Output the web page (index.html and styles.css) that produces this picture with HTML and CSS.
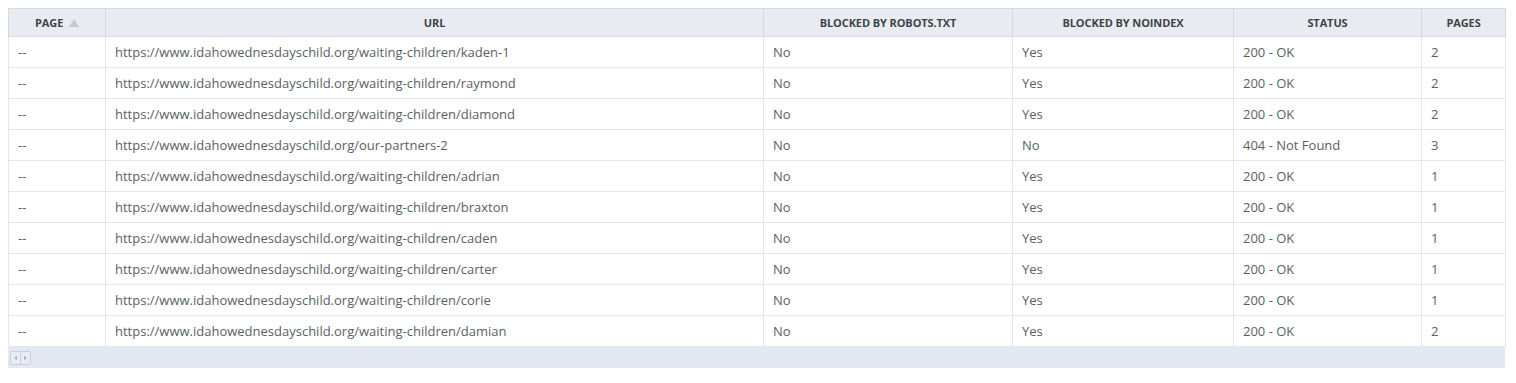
FILE: index.html
```html
<!DOCTYPE html>
<html>
<head>
<meta charset="utf-8">
<link rel="stylesheet" href="styles.css">
</head>
<body>
<div class="grid">
  <table class="tbl">
    <colgroup>
      <col class="c-page"><col class="c-url"><col class="c-robots"><col class="c-noindex"><col class="c-status"><col class="c-pages">
    </colgroup>
    <thead>
      <tr>
        <th>PAGE <span class="sort"></span></th>
        <th>URL</th>
        <th>BLOCKED BY ROBOTS.TXT</th>
        <th>BLOCKED BY NOINDEX</th>
        <th>STATUS</th>
        <th>PAGES</th>
      </tr>
    </thead>
    <tbody>
      <tr><td>--</td><td>https://www.idahowednesdayschild.org/waiting-children/kaden-1</td><td>No</td><td>Yes</td><td>200 - OK</td><td>2</td></tr>
      <tr><td>--</td><td>https://www.idahowednesdayschild.org/waiting-children/raymond</td><td>No</td><td>Yes</td><td>200 - OK</td><td>2</td></tr>
      <tr><td>--</td><td>https://www.idahowednesdayschild.org/waiting-children/diamond</td><td>No</td><td>Yes</td><td>200 - OK</td><td>2</td></tr>
      <tr><td>--</td><td>https://www.idahowednesdayschild.org/our-partners-2</td><td>No</td><td>No</td><td>404 - Not Found</td><td>3</td></tr>
      <tr><td>--</td><td>https://www.idahowednesdayschild.org/waiting-children/adrian</td><td>No</td><td>Yes</td><td>200 - OK</td><td>1</td></tr>
      <tr><td>--</td><td>https://www.idahowednesdayschild.org/waiting-children/braxton</td><td>No</td><td>Yes</td><td>200 - OK</td><td>1</td></tr>
      <tr><td>--</td><td>https://www.idahowednesdayschild.org/waiting-children/caden</td><td>No</td><td>Yes</td><td>200 - OK</td><td>1</td></tr>
      <tr><td>--</td><td>https://www.idahowednesdayschild.org/waiting-children/carter</td><td>No</td><td>Yes</td><td>200 - OK</td><td>1</td></tr>
      <tr><td>--</td><td>https://www.idahowednesdayschild.org/waiting-children/corie</td><td>No</td><td>Yes</td><td>200 - OK</td><td>1</td></tr>
      <tr><td>--</td><td>https://www.idahowednesdayschild.org/waiting-children/damian</td><td>No</td><td>Yes</td><td>200 - OK</td><td>2</td></tr>
    </tbody>
  </table>
  <div class="scrollbar">
    <div class="scroll-btns">
      <span class="btn"><span class="arr left"></span></span>
      <span class="btn"><span class="arr right"></span></span>
    </div>
  </div>
</div>
</body>
</html>
```
FILE: styles.css
```css
html, body {
  margin: 0;
  background: #ffffff;
}
body {
  padding: 8px;
  font-family: "Open Sans", "Liberation Sans", sans-serif;
}
.grid {
  width: 1497px;
}
.tbl {
  width: 100%;
  border-collapse: collapse;
  table-layout: fixed;
}
.c-page { width: 97px; }
.c-url { width: 658px; }
.c-robots { width: 249px; }
.c-noindex { width: 221px; }
.c-status { width: 188px; }
.c-pages { width: 84px; }

.tbl th {
  background: #e8ecf1;
  color: #3e4449;
  font-size: 11px;
  font-weight: 700;
  height: 27px;
  padding: 0 8px;
  border: 1px solid #d3d9df;
  text-align: center;
  vertical-align: middle;
  letter-spacing: -0.1px;
}
.tbl td {
  color: #5a5f65;
  font-size: 13px;
  height: 30px;
  padding: 0 9px;
  border: 1px solid #e3e6ea;
  white-space: nowrap;
  vertical-align: middle;
}
.tbl tbody tr:first-child td { border-top-color: #d3d9df; }
.sort {
  display: inline-block;
  width: 0;
  height: 0;
  border-left: 5px solid transparent;
  border-right: 5px solid transparent;
  border-bottom: 8px solid #c4c9cf;
  margin-left: 3px;
  vertical-align: 0;
}
.scrollbar {
  height: 21px;
  background: #e4e8f2;
  display: flex;
  align-items: center;
  padding-left: 2px;
}
.scroll-btns {
  display: flex;
  border: 1px solid #c9ced8;
  border-radius: 2px;
}
.btn {
  width: 9px;
  height: 12px;
  display: flex;
  align-items: center;
  justify-content: center;
  background: #e9ecf4;
}
.btn + .btn { border-left: 1px solid #c9ced8; }
.arr {
  width: 0;
  height: 0;
  border-top: 2px solid transparent;
  border-bottom: 2px solid transparent;
}
.arr.left { border-right: 3px solid #a8adb7; }
.arr.right { border-left: 3px solid #a8adb7; }
```
